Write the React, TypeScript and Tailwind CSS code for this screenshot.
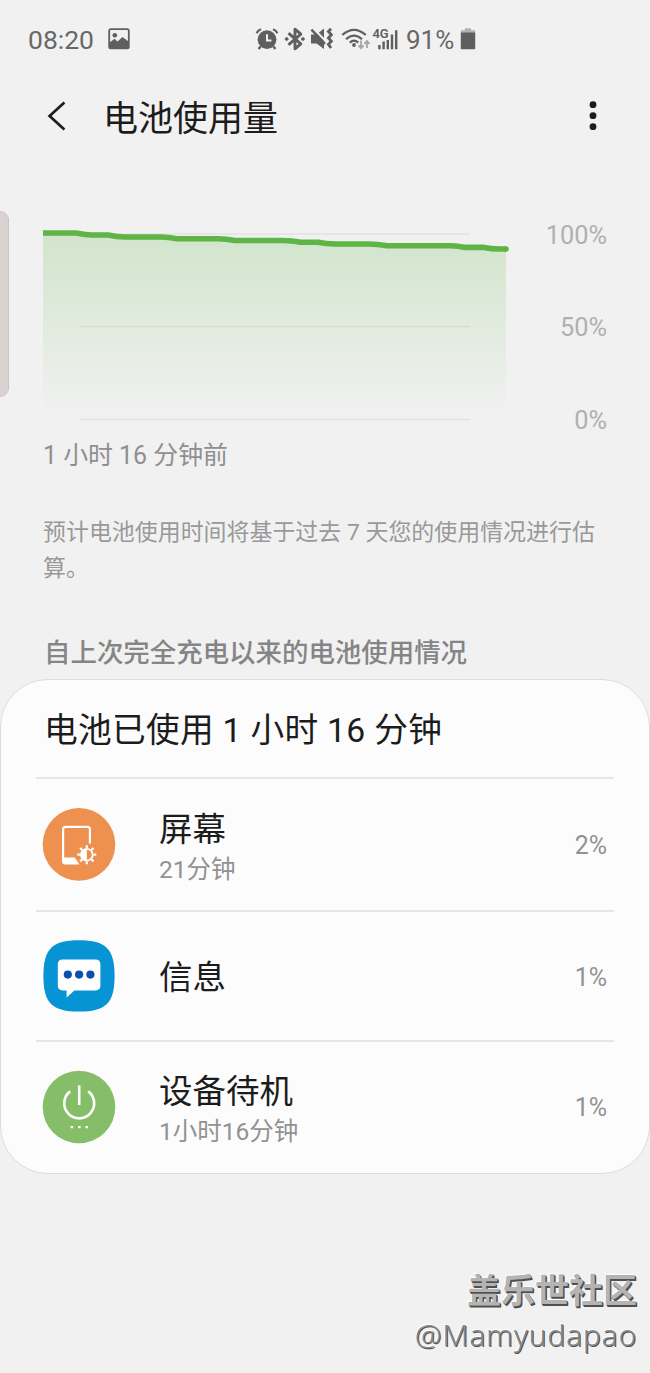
type UsageItem = {
  title: string;
  detail?: string;
  percent: string;
  icon: React.ReactNode;
  rowClass: string;
};

/* Status bar icons */

const PictureIcon = () => (
  <svg width="22" height="22" viewBox="0 0 22 22">
    <rect x="1.2" y="1.2" width="19.6" height="19.2" rx="1.6" fill="none" stroke="#5f5f5f" strokeWidth="1.8" />
    <circle cx="6.8" cy="7.2" r="2.3" fill="#5f5f5f" />
    <path d="M1.5 14.5 L6.5 10.8 L9.5 13.5 L14.5 9 L20.5 13.5 V20 H1.5 Z" fill="#5f5f5f" />
  </svg>
);

const AlarmIcon = () => (
  <svg width="24" height="24" viewBox="0 0 24 24">
    <circle cx="12" cy="12.6" r="9.4" fill="#5f5f5f" />
    <path d="M12 7.2 V13.4 H16.4" fill="none" stroke="#f1f1f1" strokeWidth="2" />
    <path d="M1.6 6.2 Q2.8 3.4 6 2.2 M22.4 6.2 Q21.2 3.4 18 2.2" fill="none" stroke="#5f5f5f" strokeWidth="2.2" />
    <path d="M5.6 19.6 L3.6 22 M18.4 19.6 L20.4 22" fill="none" stroke="#5f5f5f" strokeWidth="2.4" />
  </svg>
);

const BluetoothIcon = () => (
  <svg width="22" height="24" viewBox="0 0 22 24">
    <path d="M4.5 6.2 L16.8 16.8 L11 21.8 V2.2 L16.8 7.2 L4.5 17.8" fill="none" stroke="#5f5f5f" strokeWidth="2.9" strokeLinejoin="round" />
    <path d="M0.4 12 L2.7 9.7 L5 12 L2.7 14.3 Z M16.6 12 L18.9 9.7 L21.2 12 L18.9 14.3 Z" fill="#5f5f5f" />
  </svg>
);

const MuteIcon = () => (
  <svg width="24" height="24" viewBox="0 0 24 24">
    <path d="M1 7.6 H6.5 L14 1.6 V22 L6.5 16.6 H1 Z" fill="#5f5f5f" />
    <path d="M3.4 1.6 L16 14.6" stroke="#f1f1f1" strokeWidth="2.2" />
    <path d="M1.4 2.6 L15 16.8" stroke="#5f5f5f" strokeWidth="2.4" />
    <path d="M21 1.8 L18.4 4.6 L21.4 7.8 L18.4 11 L21.4 14.2 L18.4 17.4 L21 21" fill="none" stroke="#5f5f5f" strokeWidth="2.8" />
  </svg>
);

const WifiIcon = () => (
  <svg width="30" height="24" viewBox="0 0 30 24">
    <g fill="none" stroke="#5f5f5f" strokeWidth="2.2">
      <path d="M1.2 8 Q13 -2.4 24.8 8" />
      <path d="M5 12.2 Q13 5 21 12.2" />
      <path d="M8.8 15.6 Q13 11.6 17.2 15.6" />
    </g>
    <circle cx="13" cy="18" r="1.9" fill="#5f5f5f" />
    <path d="M20 13.6 V20 M17.4 18.4 L20 21.2 L22.6 18.4 M26 21 V14.6 M23.4 16.8 L26 14 L28.6 16.8" fill="none" stroke="#a6a6a6" strokeWidth="1.8" />
  </svg>
);

const SignalIcon = () => (
  <svg width="26" height="24" viewBox="0 0 26 24" className="overflow-visible">
    <text x="-0.6" y="11.2" fontFamily="Roboto, sans-serif" fontSize="13" fontWeight="600" fill="#5f5f5f">4G</text>
    <path d="M6.4 18 V22.2 M10.6 14.4 V22.2 M14.8 13 V22.2 M19 7.6 V22.2 M23.2 3.2 V22.2" stroke="#5f5f5f" strokeWidth="2.4" />
  </svg>
);

const BatteryIcon = () => (
  <svg width="16" height="24" viewBox="0 0 16 24">
    <path d="M4.8 1.2 H11 V3.2 H15.2 V6 H0.8 V3.2 H4.8 Z" fill="#b3b3b3" />
    <rect x="0.8" y="5.4" width="14.4" height="16.8" rx="0.8" fill="#5f5f5f" />
  </svg>
);

/* App icons */

const ScreenIcon = () => (
  <svg width="74" height="74" viewBox="0 0 74 74">
    <circle cx="37" cy="36.4" r="36.3" fill="#ee9150" />
    <path d="M47.9 35.5 V21.4 Q47.9 18.9 45.4 18.9 H23.6 Q21.1 18.9 21.1 21.4 V53 Q21.1 55.4 23.6 55.4 H35.4 L32.2 50.6 H21.1" fill="none" stroke="#fff" strokeWidth="2.2" />
    <path d="M21.2 50.6 H31.4 L34.8 55.4 H22.4 Z" fill="#fff" />
    <g stroke="#fff" strokeWidth="2.2">
      <path d="M44.8 37.2 V40 M44.8 53.4 V56.2 M35.3 46.7 H38.1 M51.5 46.7 H54.3 M38.1 40 L40.1 42 M49.5 51.4 L51.5 53.4 M38.1 53.4 L40.1 51.4 M49.5 42 L51.5 40" />
      <circle cx="44.8" cy="46.7" r="5.9" fill="none" strokeWidth="1.8" />
    </g>
    <path d="M44.8 41 A5.7 5.7 0 0 0 44.8 52.4 Z" fill="#fff" />
  </svg>
);

const MessageIcon = () => (
  <svg width="74" height="74" viewBox="0 0 74 74">
    <path d="M37 1.2 C64 1.2 72.6 10 72.6 37 C72.6 64 64 72.6 37 72.6 C10 72.6 1.4 64 1.4 37 C1.4 10 10 1.2 37 1.2 Z" fill="#0794d4" />
    <path d="M20.6 20.4 H53.6 Q58.4 20.4 58.4 25.2 V46.6 Q58.4 51.4 53.6 51.4 H32.4 L24.6 58.4 V51.4 H20.6 Q15.8 51.4 15.8 46.6 V25.2 Q15.8 20.4 20.6 20.4 Z" fill="#fff" />
    <g fill="#0d4fae">
      <circle cx="25.8" cy="35.6" r="4.1" />
      <circle cx="37.1" cy="35.6" r="4.1" />
      <circle cx="48.4" cy="35.6" r="4.1" />
    </g>
  </svg>
);

const StandbyIcon = () => (
  <svg width="74" height="74" viewBox="0 0 74 74">
    <circle cx="37" cy="37" r="36.3" fill="#86bd68" />
    <path d="M28.2 21.4 A15 15 0 1 0 46.2 21.4" fill="none" stroke="#fff" strokeWidth="2.6" />
    <path d="M37.2 15.4 V35" stroke="#fff" strokeWidth="2.6" />
    <path d="M28.6 57.2 h2.6 M36 57.2 h2.6 M43.4 57.2 h2.6" stroke="#fff" strokeWidth="2.2" />
  </svg>
);

const items: UsageItem[] = [
  { title: "屏幕", detail: "21分钟", percent: "2%", icon: <ScreenIcon />, rowClass: "h-[133px]" },
  { title: "信息", percent: "1%", icon: <MessageIcon />, rowClass: "h-[130px]" },
  { title: "设备待机", detail: "1小时16分钟", percent: "1%", icon: <StandbyIcon />, rowClass: "h-[131px]" },
];

const StatusBar = () => (
  <div className="flex h-[78px] items-center pl-7 text-[26.5px] text-[#686868]">
    <span className="w-20 pt-0.5">08:20</span>
    <PictureIcon />
    <div className="ml-[125px] flex items-center">
      <AlarmIcon />
      <span className="ml-[5px]"><BluetoothIcon /></span>
      <span className="ml-1"><MuteIcon /></span>
      <span className="ml-[7px]"><WifiIcon /></span>
      <span className="ml-0.5"><SignalIcon /></span>
      <span className="ml-[7px] w-[54px] pt-0.5 text-[26px]">91%</span>
      <BatteryIcon />
    </div>
  </div>
);

const Header = () => (
  <header className="flex h-[76px] items-center pr-[52px] pl-[46px] text-[#1c1c1c]">
    <svg width="24" height="32" viewBox="0 0 24 32">
      <path d="M18.4 2.6 L3.6 16 L18.4 29.4" fill="none" stroke="currentColor" strokeWidth="2.7" />
    </svg>
    <h1 className="ml-[33px] flex-1 pt-[7px] text-[35px] leading-none">电池使用量</h1>
    <svg width="10" height="30" viewBox="0 0 10 30">
      <circle cx="5" cy="3.7" r="3.4" fill="currentColor" />
      <circle cx="5" cy="14.7" r="3.4" fill="currentColor" />
      <circle cx="5" cy="25.7" r="3.4" fill="currentColor" />
    </svg>
  </header>
);

const BatteryChart = () => (
  <section className="flex h-[210px] px-[43px]">
    <svg width="470" height="210" viewBox="0 0 470 210">
      <defs>
        <linearGradient id="level" x1="0" y1="0" x2="0" y2="1">
          <stop offset="0" stopColor="#5fb946" stopOpacity="0.22" />
          <stop offset="1" stopColor="#5fb946" stopOpacity="0" />
        </linearGradient>
      </defs>
      <path d="M37 14 H426.5 M37 106.5 H426.5 M37 199.5 H426.5" stroke="#e2e2e2" strokeWidth="1.6" />
      <path d="M0 13 H35 L49 15 H65 L81 17 H122 L133 19 H178 L191 21 H242 L258 23 H284 L294 24.5 H328 L343 26 H411 L421 27.5 H443 L453 29 H463 V196 H0 Z" fill="url(#level)" />
      <path d="M0 13 H33 Q40 14.5 48 15 H65 Q74 17 82 17 H118 Q126 17 134 18.7 H175 Q183 18.7 192 20.5 H240 Q249 20.5 258 22.3 H275 Q283 23.8 292 24 H326 Q335 24 344 25.8 H408 Q415 25.8 422 27.4 H441 Q448 28.9 456 29 H463" fill="none" stroke="#5fb446" strokeWidth="5.6" strokeLinejoin="round" />
      <circle cx="463" cy="29" r="2.8" fill="#5fb446" />
    </svg>
    <div className="-mt-px flex flex-1 flex-col text-right text-[25.3px] text-[#b0b0b0]">
      <span className="h-[92px] shrink-0 leading-[34px]">100%</span>
      <span className="h-[93px] shrink-0 leading-[34px]">50%</span>
      <span className="shrink-0 leading-[34px]">0%</span>
    </div>
  </section>
);

const UsageRow = ({ title, detail, percent, icon, rowClass }: UsageItem) => (
  <li className={`flex items-center border-t-2 border-[#e6e6e6] pr-[7px] pl-1.5 ${rowClass}`}>
    {icon}
    <div className={`ml-[43px] flex-1 ${detail ? "pt-2" : "pt-1"}`}>
      <p className="text-[33.5px] leading-[42px] text-[#1c1c1c]">{title}</p>
      {detail && <p className="text-[24.5px] leading-[38px] text-[#929292]">{detail}</p>}
    </div>
    <span className="pt-[3px] text-[25px] text-[#929292]">{percent}</span>
  </li>
);

const App = () => {
  return (
    <main className="relative h-[1373px] w-[650px] overflow-hidden bg-[#f1f1f1] font-[Roboto,'Noto_Sans_CJK_SC',sans-serif]">

      {/* Edge panel handle */}

      <div className="absolute top-[211px] -left-2.5 h-[186px] w-[19px] rounded-[9px] border border-[#c9c3c2] bg-[#dad2d0]" />

      <StatusBar />
      <Header />

      {/* Chart */}

      <div className="mt-[66px]">
        <BatteryChart />
      </div>
      <p className="mt-[7px] pl-[43px] text-[24.9px] leading-[38px] text-[#8f8f8f]">1 小时 16 分钟前</p>

      {/* Estimate */}

      <p className="mt-10 pl-[43px] text-[22.95px] leading-[35.5px] whitespace-nowrap text-[#999999]">
        预计电池使用时间将基于过去 7 天您的使用情况进行估<br />算。
      </p>
      <h2 className="mt-[47px] h-[46px] pl-11 text-[26.45px] leading-[40px] font-medium text-[#858585]">
        自上次完全充电以来的电池使用情况
      </h2>

      {/* Usage since last full charge */}

      <section className="h-[495px] rounded-[48px] border border-[#dcdcdc] bg-[#fcfcfc] px-[35px]">
        <h3 className="h-[97px] pl-2 text-[33.7px] leading-[102px] tracking-[0.3px] text-[#1c1c1c]">电池已使用 1 小时 16 分钟</h3>
        <ul>
          {items.map((item) => (
            <UsageRow key={item.title} {...item} />
          ))}
        </ul>
      </section>

      {/* Watermark */}

      <footer className="mt-[94px] pr-[13px] text-right">
        <p className="text-[34px] leading-[46px] font-bold text-[#b4b4b4] [text-shadow:1px_1px_0_#505050,1.5px_1.5px_0_#505050,-1px_-1px_0_#ffffff]">盖乐世社区</p>
        <p className="font-['Noto_Sans',sans-serif] text-[30px] leading-[42px] font-light tracking-[0.8px] text-[#8a8a8a] [text-shadow:1px_1px_0_#505050,-1px_-1px_0_#ffffff]">@Mamyudapao</p>
      </footer>

    </main>
  );
};

export default App;
